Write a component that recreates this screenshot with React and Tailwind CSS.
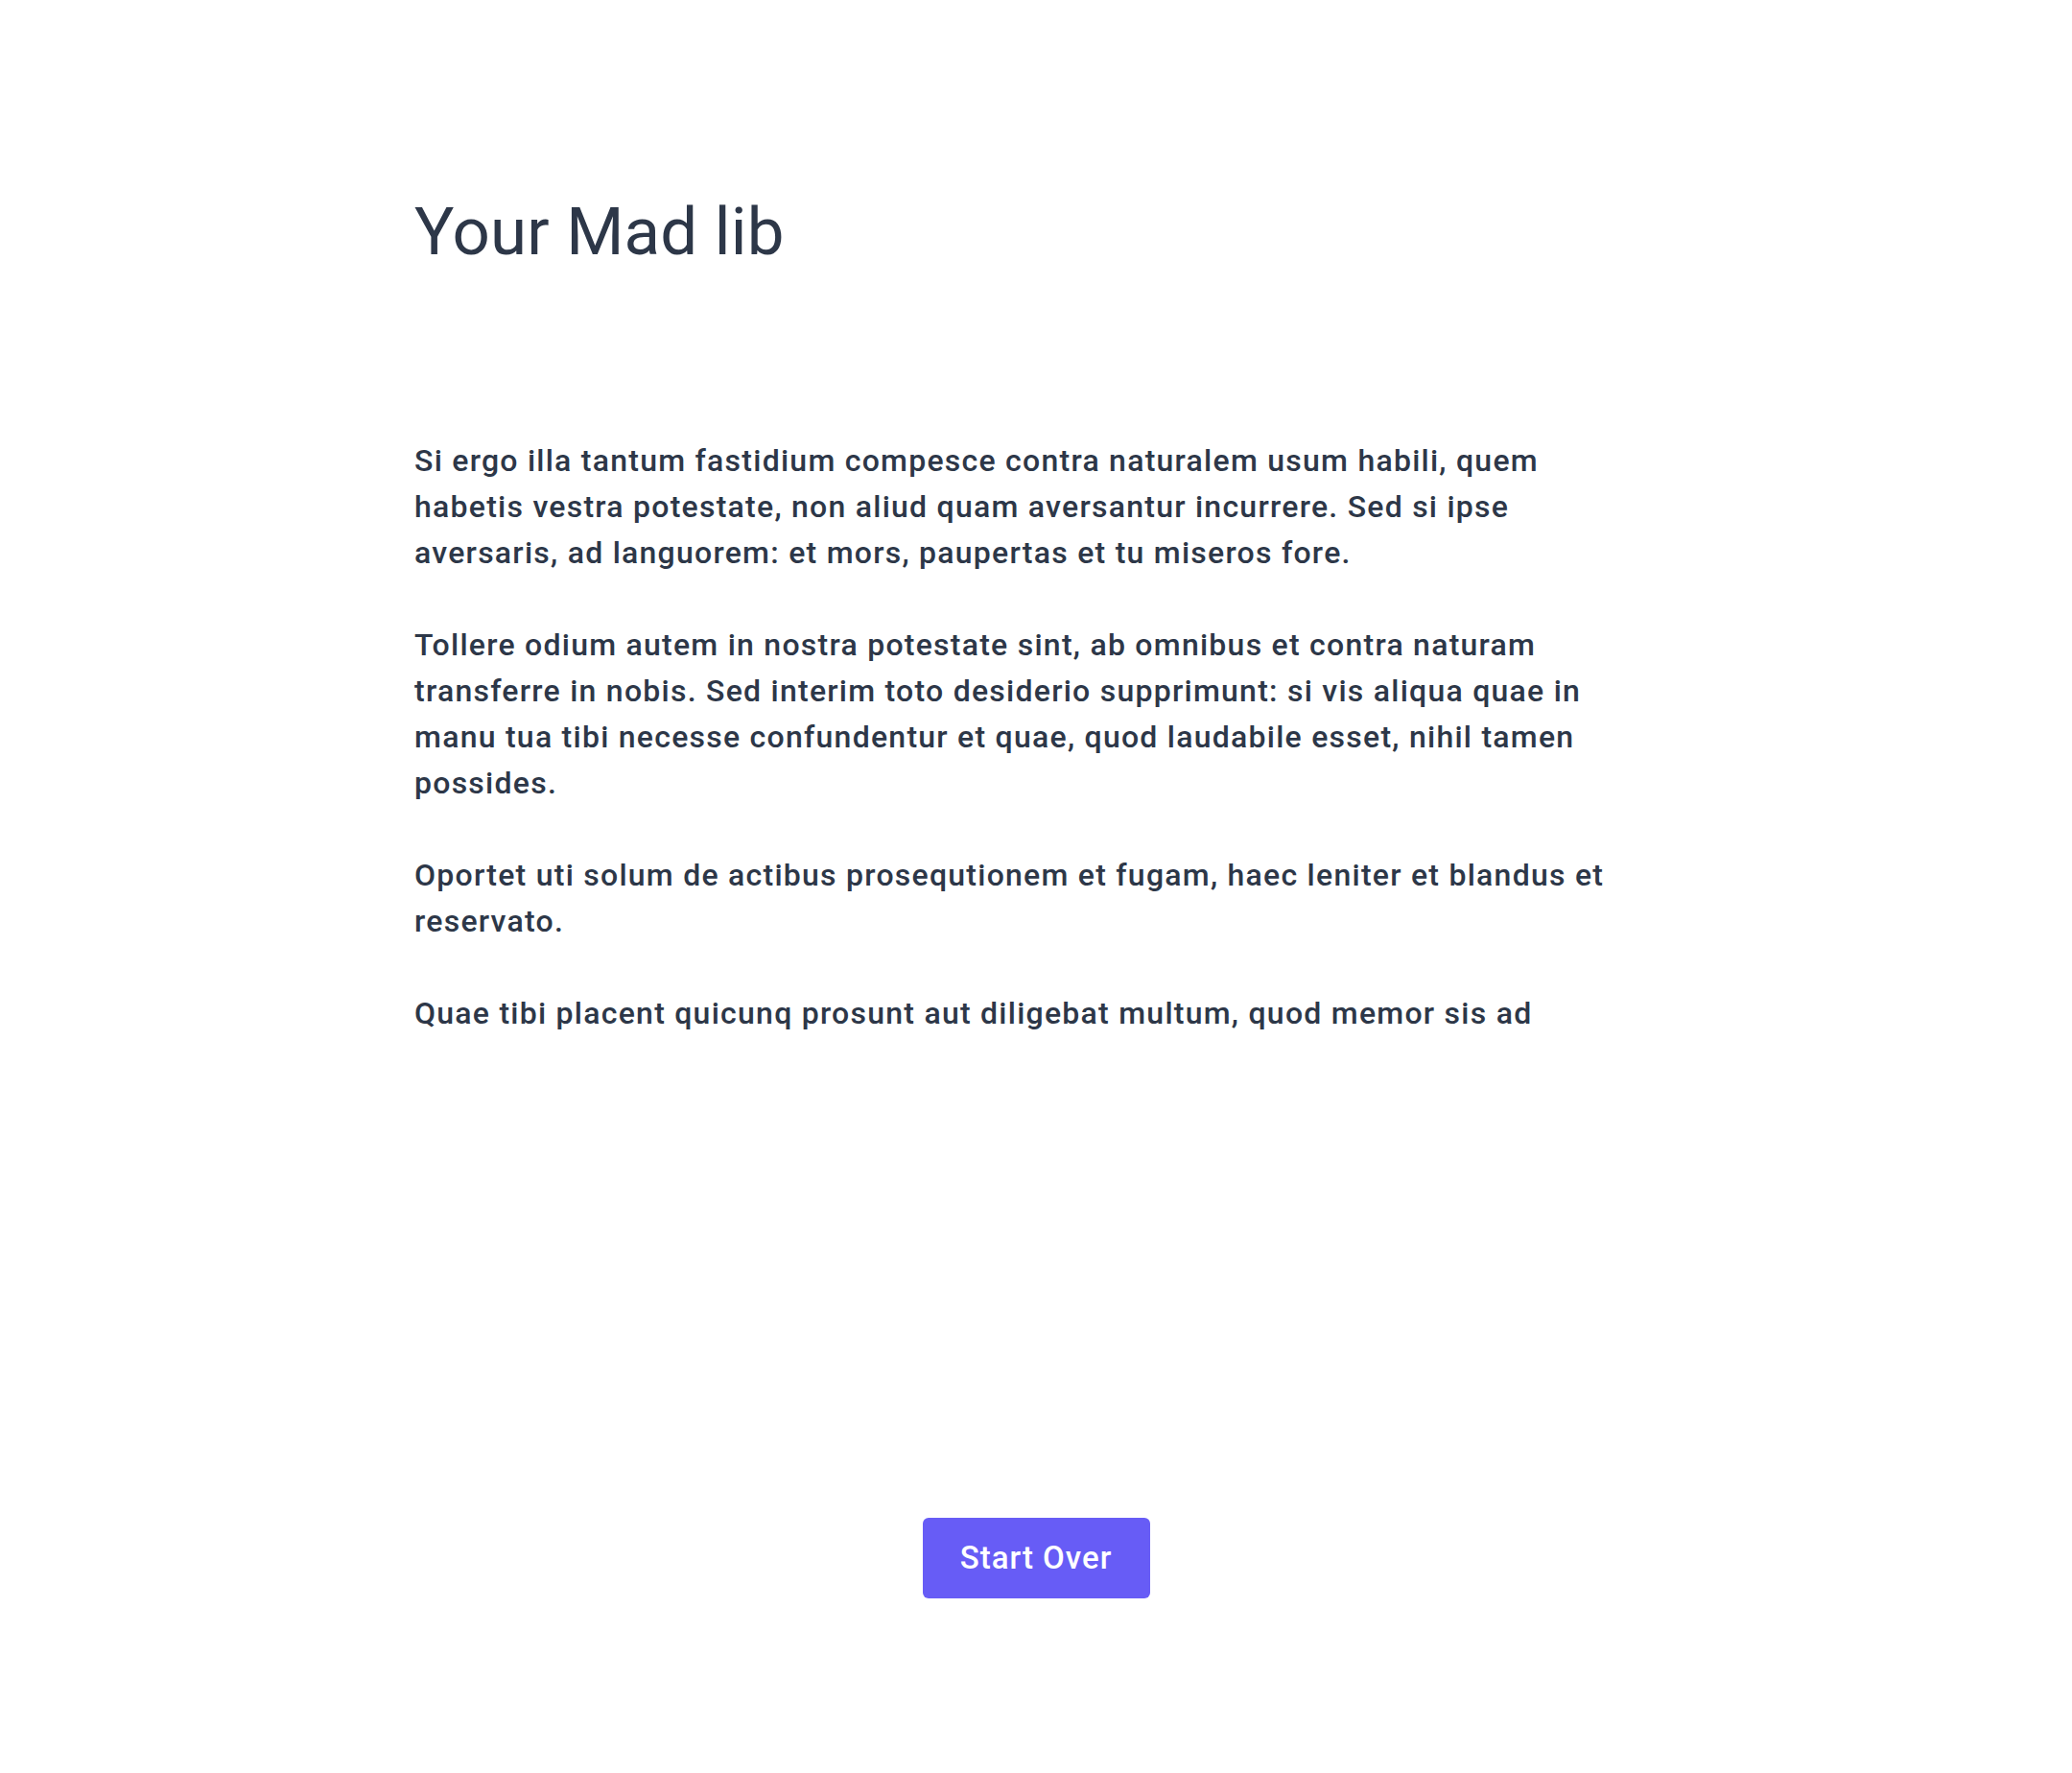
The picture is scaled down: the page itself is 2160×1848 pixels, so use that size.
import React from 'react';

const paragraphs = [
  'Si ergo illa tantum fastidium compesce contra naturalem usum habili, quem habetis vestra potestate, non aliud quam aversantur incurrere. Sed si ipse aversaris, ad languorem: et mors, paupertas et tu miseros fore.',
  'Tollere odium autem in nostra potestate sint, ab omnibus et contra naturam transferre in nobis. Sed interim toto desiderio supprimunt: si vis aliqua quae in manu tua tibi necesse confundentur et quae, quod laudabile esset, nihil tamen possides.',
  'Oportet uti solum de actibus prosequtionem et fugam, haec leniter et blandus et reservato.',
  'Quae tibi placent quicunq prosunt aut diligebat multum, quod memor sis ad',
];

const App = () => {
  return (
    <div className="min-h-screen bg-white text-[#2d3748] font-['Roboto','Liberation_Sans',sans-serif]">
      <div className="w-[1296px] mx-auto pt-[207px]">
        <h1 className="text-[69px] leading-none font-normal tracking-[0.2px]">Your Mad lib</h1>

        <div className="mt-[180px] h-[624px] max-w-[1280px]">
          {paragraphs.map((text, idx) => (
            <p key={idx} className="text-[32px] leading-[48px] font-medium tracking-[1.25px] mb-[48px]">
              {text}
            </p>
          ))}
        </div>

        <div className="flex justify-center mt-[502px]">
          <button className="w-[237px] h-[84px] rounded-[6px] bg-[#675cf6] text-white text-[33px] font-medium tracking-[1px]">
            Start Over
          </button>
        </div>
      </div>
    </div>
  );
};

export default App;
